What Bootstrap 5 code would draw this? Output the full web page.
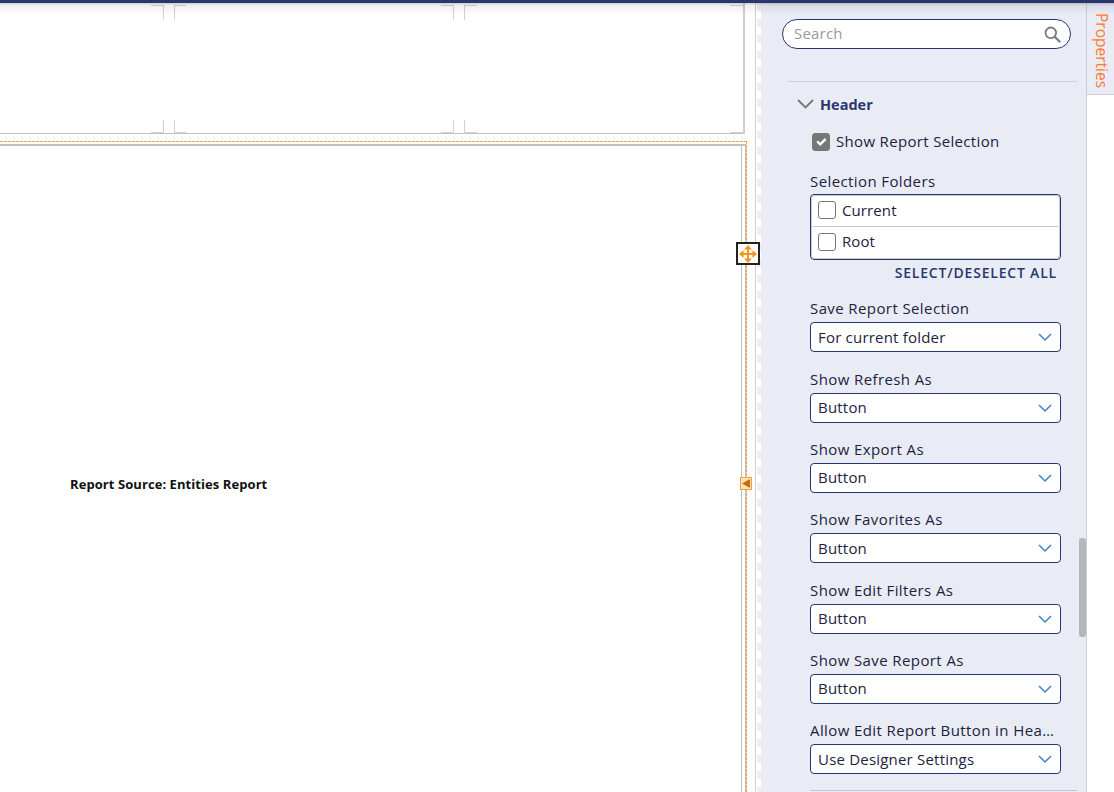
<!DOCTYPE html>
<html lang="en">
<head>
    <meta charset="UTF-8">
    <meta name="viewport" content="width=device-width, initial-scale=1.0">
    <title>Report Designer</title>
    <link href="https://cdn.jsdelivr.net/npm/bootstrap@5.3.0/dist/css/bootstrap.min.css" rel="stylesheet">
    <style>
        html, body { height: 792px; overflow: hidden; }
        body { font-family: "Open Sans", "Noto Sans", sans-serif; font-size: 15px; color: #1c2340; background: #fff; }
        .top-bar { height: 3px; background: #2a3670; }
        .top-shade { position: absolute; left: 0; right: 0; top: 3px; height: 12px; background: linear-gradient(rgba(0,0,0,.22) 0, rgba(0,0,0,.07) 2px, rgba(0,0,0,0) 100%); z-index: 4; pointer-events: none; }
        .page { height: 789px; }

        /* canvas */
        .canvas { width: 761px; flex: none; position: relative; overflow: hidden; }
        .band { height: 131px; width: 745px; border-bottom: 1px solid #c0c0c0; border-right: 2px solid #cfcfcf; }
        .crop { position: absolute; background: #d2d2d2; z-index: 2; }
        .report { position: absolute; left: 0; top: 138px; width: 747px; height: 660px; padding: 1px 1px 0 0;
            background: repeating-linear-gradient(90deg, #f7a24a 0 3px, #fde6cc 3px 4px) top left / 100% 1px no-repeat,
                        repeating-linear-gradient(#f7a24a 0 3px, #fde6cc 3px 4px) top right / 1px 100% no-repeat; }
        .report-inner { height: 100%; margin-top: 2px; width: 746px; border-top: 2px solid #c0c0c0; border-right: 1px solid #c0c0c0; position: relative; padding: 329px 0 0 70px; }
        .report-inner::after { content: ""; position: absolute; right: 3px; top: 0; bottom: 0; border-right: 1px solid #c0c0c0; }
        .report-title { font-size: 13px; font-weight: 700; color: #111; line-height: 18px; letter-spacing: .07px; }
        .gutter { position: absolute; left: 755px; top: 0; bottom: 0; width: 6px; border-left: 1px solid #cfcfcf; background: repeating-linear-gradient(#efefef 0 8px, #fff 8px 16px) 1px 0 no-repeat; }
        .move-handle { position: absolute; left: 736px; top: 239px; width: 24px; height: 23px; border: 2px solid #222; background: #fff; z-index: 3; }
        .collapse-handle { position: absolute; left: 740px; top: 474px; width: 12px; height: 13px; border: 1px solid #f7a031; background: #fde3c4; z-index: 3; }

        /* panel */
        .panel { width: 326px; flex: none; background: #e9ecf5; border-right: 1px solid #cbcdd2; position: relative; overflow: hidden; }
        .search-row { padding: 16px 15px 0 21px; }
        .search-box { height: 30px; border: 1px solid #2a3670; border-radius: 15px; background: #fff; padding: 0 9px 0 11px; }
        .search-box input { border: 0; outline: 0; background: none; padding: 0 0 2px; font-size: 15px; letter-spacing: .2px; color: #333; min-width: 0; }
        .search-box input::placeholder { color: #9a9a9a; }
        .rule { margin: 32px 9px 0 27px; border-top: 1px solid #cdd0d6; }
        .group-head { padding: 12px 0 0 36px; height: 41px; color: #2a3670; font-weight: 700; font-size: 14.5px; line-height: 22px; gap: 6px; }
        .fields { padding: 0 25px 0 49px; }
        .show-check { padding: 8px 0 0 2px; height: 38px; gap: 6px; line-height: 20px; letter-spacing: .33px; }
        .show-check .box-check { margin-top: 2px; }
        .box-check.form-check-input { width: 18px; height: 18px; flex: none; border: 1px solid #777; border-radius: 3px; background-color: #fff; }
        .folder-list .box-check.form-check-input { margin: 0; }
        .box-check.form-check-input:checked { background-color: #777; border-color: #777; }
        .field-label { display: block; line-height: 20px; height: 24px; margin: 0; letter-spacing: .4px; }
        .first-label { margin-top: 10px; height: 21px; }
        .label-cut { padding-right: 6px; }
        .folder-list { border: 1px solid #2a3670; border-radius: 4px; margin-top: 2px; }
        .folder-list .list-group-item { height: 32px; padding: 0 6px 2px; gap: 6px; border-color: #c8c8c8; color: #1c2340; background: #fff; letter-spacing: .1px; }
        .select-all { text-align: right; padding-right: 4px; font-size: 14px; font-weight: 600; letter-spacing: .8px; color: #2a3670; line-height: 18px; margin: 4px 0 0; }
        .first-field { margin-top: 16.4px; }
        .field { margin-top: 16.33px; }
        .field-sel.form-select { height: 30px; border: 1px solid #2a3670; border-radius: 4px; padding: 0 30px 1px 7px; font-size: 15px; letter-spacing: .2px; color: #1c2340; background-position: right 7px center; background-size: 16px 10px;
            background-image: url("data:image/svg+xml,%3csvg xmlns='http://www.w3.org/2000/svg' viewBox='0 0 16 10'%3e%3cpath fill='none' stroke='%233f82c4' stroke-width='1.5' d='M2 2l6 6 6-6'/%3e%3c/svg%3e"); }
        .bottom-rule { margin: 16px 9px 0 49px; border-top: 1px solid #c4c6cc; }
        .scroll-thumb { position: absolute; right: 0; top: 535px; width: 7px; height: 99px; background: #b4b6bc; border-radius: 3px; }

        /* tab */
        .side-col { width: 27px; flex: none; }
        .tab-label { height: 92px; background: #e9ecf5; border-bottom: 1px solid #cbcdd2; color: #ff7a2f; writing-mode: vertical-rl; font-size: 15.5px; font-weight: 500; line-height: 24px; padding: 10px 0 0 3px; }
    </style>
</head>
<body>
    <div class="top-bar"></div>
    <div class="top-shade"></div>
    <div class="page d-flex">
        <!-- canvas -->
        <div class="canvas">
            <div class="band"></div>
            <div class="crop" style="left:163px;top:2px;width:1px;height:15px"></div>
            <div class="crop" style="left:174px;top:2px;width:1px;height:15px"></div>
            <div class="crop" style="left:453px;top:2px;width:1px;height:15px"></div>
            <div class="crop" style="left:464px;top:2px;width:1px;height:15px"></div>
            <div class="crop" style="left:151px;top:2px;width:12px;height:1px"></div>
            <div class="crop" style="left:175px;top:2px;width:11px;height:1px"></div>
            <div class="crop" style="left:441px;top:2px;width:12px;height:1px"></div>
            <div class="crop" style="left:465px;top:2px;width:12px;height:1px"></div>
            <div class="crop" style="left:163px;top:117px;width:1px;height:14px"></div>
            <div class="crop" style="left:174px;top:117px;width:1px;height:14px"></div>
            <div class="crop" style="left:453px;top:117px;width:1px;height:14px"></div>
            <div class="crop" style="left:464px;top:117px;width:1px;height:14px"></div>
            <div class="crop" style="left:151px;top:129px;width:12px;height:1px"></div>
            <div class="crop" style="left:175px;top:129px;width:11px;height:1px"></div>
            <div class="crop" style="left:441px;top:129px;width:12px;height:1px"></div>
            <div class="crop" style="left:465px;top:129px;width:12px;height:1px"></div>
            <div class="crop" style="left:730px;top:2px;width:14px;height:1px"></div>
            <div class="crop" style="left:730px;top:129px;width:14px;height:1px"></div>
            <div class="report">
                <div class="report-inner">
                    <div class="report-title">Report Source: Entities Report</div>
                </div>
            </div>
            <div class="gutter"></div>
            <div class="move-handle d-flex align-items-center justify-content-center">
                <svg width="18" height="18" viewBox="0 0 18 18"><path fill="none" stroke="#f7941e" stroke-width="2" d="M9 2v14M2 9h14"/><path fill="#f7941e" d="M9 0l4 4.500H5zM9 18l-4-4.500h8zM0 9l4.500-4v8zM18 9l-4.500 4V5z"/></svg>
            </div>
            <div class="collapse-handle d-flex align-items-center justify-content-center">
                <svg width="8" height="9" viewBox="0 0 8 9"><path fill="#c46f00" d="M0 4.500L8 0v9z"/></svg>
            </div>
        </div>

        <!-- properties panel -->
        <div class="panel">
            <div class="search-row">
                <div class="search-box d-flex align-items-center">
                    <input class="flex-grow-1" type="text" placeholder="Search">
                    <svg width="17" height="17" viewBox="0 0 17 17"><circle cx="6.800" cy="6.800" r="5.300" fill="none" stroke="#7a7a7a" stroke-width="1.800"/><path stroke="#7a7a7a" stroke-width="2.200" d="M10.700 10.700l5.500 5.500"/></svg>
                </div>
            </div>
            <div class="rule"></div>
            <div class="group-head d-flex">
                <svg class="mt-1" width="17" height="12" viewBox="0 0 17 12"><path fill="none" stroke="#777" stroke-width="1.800" d="M1 2l7.500 7.500L16 2"/></svg>
                <span>Header</span>
            </div>
            <div class="fields">
                <label class="show-check d-flex">
                    <input class="form-check-input box-check" type="checkbox" checked>
                    <span>Show Report Selection</span>
                </label>
                <span class="field-label first-label">Selection Folders</span>
                <div class="list-group folder-list">
                    <label class="list-group-item d-flex align-items-center">
                        <input class="form-check-input box-check" type="checkbox">
                        <span>Current</span>
                    </label>
                    <label class="list-group-item d-flex align-items-center">
                        <input class="form-check-input box-check" type="checkbox">
                        <span>Root</span>
                    </label>
                </div>
                <div class="select-all">SELECT/DESELECT ALL</div>

                <div class="first-field">
                    <label class="field-label">Save Report Selection</label>
                    <select class="form-select field-sel"><option>For current folder</option></select>
                </div>
                <div class="field">
                    <label class="field-label">Show Refresh As</label>
                    <select class="form-select field-sel"><option>Button</option></select>
                </div>
                <div class="field">
                    <label class="field-label">Show Export As</label>
                    <select class="form-select field-sel"><option>Button</option></select>
                </div>
                <div class="field">
                    <label class="field-label">Show Favorites As</label>
                    <select class="form-select field-sel"><option>Button</option></select>
                </div>
                <div class="field">
                    <label class="field-label">Show Edit Filters As</label>
                    <select class="form-select field-sel"><option>Button</option></select>
                </div>
                <div class="field">
                    <label class="field-label">Show Save Report As</label>
                    <select class="form-select field-sel"><option>Button</option></select>
                </div>
                <div class="field">
                    <label class="field-label text-truncate label-cut">Allow Edit Report Button in Header</label>
                    <select class="form-select field-sel"><option>Use Designer Settings</option></select>
                </div>
            </div>
            <div class="bottom-rule"></div>
            <div class="scroll-thumb"></div>
        </div>

        <div class="side-col">
            <div class="tab-label">Properties</div>
        </div>
    </div>
    <script src="https://cdn.jsdelivr.net/npm/bootstrap@5.3.0/dist/js/bootstrap.bundle.min.js"></script>
</body>
</html>
